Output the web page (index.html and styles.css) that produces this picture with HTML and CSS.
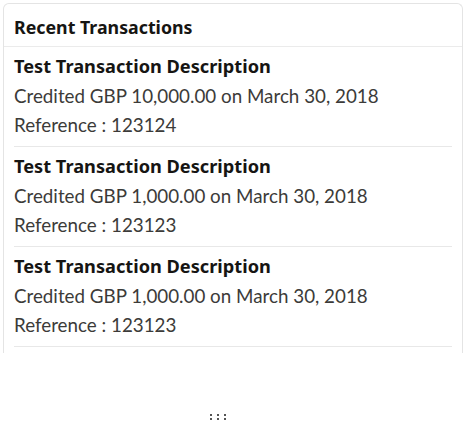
FILE: index.html
```html
<!DOCTYPE html>
<html>
<head>
<meta charset="utf-8">
<link rel="stylesheet" href="styles.css">
</head>
<body>
<div class="page">
  <section class="card">
    <header class="card-header">Recent Transactions</header>
    <ul class="list">
      <li class="item">
        <div class="title">Test Transaction Description</div>
        <div class="line">Credited GBP 10,000.00 on March 30, 2018</div>
        <div class="line">Reference : 123124</div>
      </li>
      <li class="item">
        <div class="title">Test Transaction Description</div>
        <div class="line">Credited GBP 1,000.00 on March 30, 2018</div>
        <div class="line">Reference : 123123</div>
      </li>
      <li class="item">
        <div class="title">Test Transaction Description</div>
        <div class="line">Credited GBP 1,000.00 on March 30, 2018</div>
        <div class="line">Reference : 123123</div>
      </li>
    </ul>
  </section>
  <div class="handle" aria-hidden="true">
    <span></span><span></span><span></span>
    <span></span><span></span><span></span>
  </div>
</div>
</body>
</html>
```
FILE: styles.css
```css
* { box-sizing: border-box; }
html, body { margin: 0; padding: 0; background: #fff; }
body {
  font-family: Lato, "Noto Sans", sans-serif;
  color: #161513;
}
.page {
  width: 465px;
  height: 431px;
  padding: 3px 3px 0 3px;
  display: flex;
  flex-direction: column;
}
.card {
  width: 460px;
  height: 350px;
  border: 1px solid #e4e4e4;
  border-bottom: none;
  border-radius: 6px 6px 0 0;
  overflow: hidden;
}
.card-header {
  height: 43px;
  padding: 11px 10px 0 10px;
  font-family: "Noto Sans", Lato, sans-serif;
  font-size: 17.8px;
  font-weight: 700;
  line-height: 24px;
  border-bottom: 1px solid #ebebeb;
}
.list {
  list-style: none;
  margin: 0;
  padding: 0 10px;
}
.item {
  padding: 5px 0 7px 0;
  border-bottom: 1px solid #e8e8e8;
}
.title {
  font-family: "Noto Sans", Lato, sans-serif;
  font-size: 18.2px;
  font-weight: 700;
  line-height: 29px;
  color: #161513;
}
.line {
  font-size: 18.8px;
  line-height: 29px;
  color: #3c3b39;
}
.handle {
  margin-top: 61px;
  margin-left: 207px;
  display: grid;
  grid-template-columns: repeat(3, 2px);
  grid-auto-rows: 2px;
  column-gap: 5px;
  row-gap: 2px;
}
.handle span {
  width: 2px;
  height: 2px;
  background: #555;
}
```
